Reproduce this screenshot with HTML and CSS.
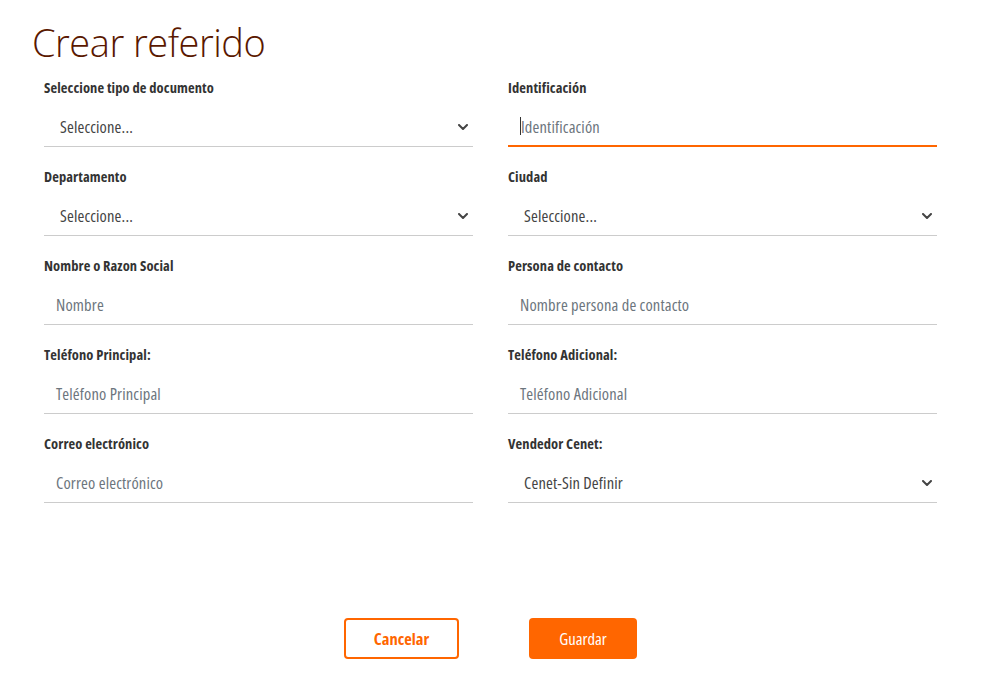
FILE: index.html
```html
<!DOCTYPE html>
<html lang="es">
<head>
<meta charset="utf-8">
<title>Crear referido</title>
<link rel="stylesheet" href="styles.css">
</head>
<body>
<div class="page">
  <h1 class="title">Crear referido</h1>
  <form class="form">
    <div class="grid">
      <div class="field">
        <label class="label">Seleccione tipo de documento</label>
        <div class="control select"><span class="value">Seleccione...</span><svg class="chev" viewBox="0 0 10 6"><path d="M1 1l4 4 4-4" /></svg></div>
      </div>
      <div class="field">
        <label class="label">Identificación</label>
        <div class="control input focused"><span class="caret"></span><span class="ph">Identificación</span></div>
      </div>
      <div class="field">
        <label class="label">Departamento</label>
        <div class="control select"><span class="value">Seleccione...</span><svg class="chev" viewBox="0 0 10 6"><path d="M1 1l4 4 4-4" /></svg></div>
      </div>
      <div class="field">
        <label class="label">Ciudad</label>
        <div class="control select"><span class="value">Seleccione...</span><svg class="chev" viewBox="0 0 10 6"><path d="M1 1l4 4 4-4" /></svg></div>
      </div>
      <div class="field">
        <label class="label">Nombre o Razon Social</label>
        <div class="control input"><span class="ph">Nombre</span></div>
      </div>
      <div class="field">
        <label class="label">Persona de contacto</label>
        <div class="control input"><span class="ph">Nombre persona de contacto</span></div>
      </div>
      <div class="field">
        <label class="label">Teléfono Principal:</label>
        <div class="control input"><span class="ph">Teléfono Principal</span></div>
      </div>
      <div class="field">
        <label class="label">Teléfono Adicional:</label>
        <div class="control input"><span class="ph">Teléfono Adicional</span></div>
      </div>
      <div class="field">
        <label class="label">Correo electrónico</label>
        <div class="control input"><span class="ph">Correo electrónico</span></div>
      </div>
      <div class="field">
        <label class="label">Vendedor Cenet:</label>
        <div class="control select"><span class="value">Cenet-Sin Definir</span><svg class="chev" viewBox="0 0 10 6"><path d="M1 1l4 4 4-4" /></svg></div>
      </div>
    </div>
    <div class="actions">
      <button type="button" class="btn btn-outline">Cancelar</button>
      <button type="button" class="btn btn-solid">Guardar</button>
    </div>
  </form>
</div>
</body>
</html>
```
FILE: styles.css
```css
html, body {
  margin: 0;
  padding: 0;
  background: #ffffff;
}
body {
  font-family: "Open Sans", Roboto, sans-serif;
  font-stretch: 75%;
  color: #333333;
}
.page {
  padding: 14px 70px 0 44px;
}
.title {
  margin: 0 0 0 -12px;
  font-family: "Open Sans", "Noto Sans", sans-serif;
  font-stretch: 100%;
  font-weight: 300;
  font-size: 38px;
  line-height: 56px;
  color: #5a1800;
  letter-spacing: -0.5px;
}
.form {
  display: flex;
  flex-direction: column;
}
.grid {
  display: grid;
  grid-template-columns: 429px 429px;
  column-gap: 35px;
  row-gap: 20px;
  margin-top: 8px;
}
.field {
  display: flex;
  flex-direction: column;
}
.label {
  font-weight: bold;
  font-size: 14.5px;
  letter-spacing: 0.1px;
  line-height: 20px;
  color: #333333;
  height: 20px;
}
.control {
  display: flex;
  align-items: center;
  height: 49px;
  padding-top: 9px;
  border-bottom: 1px solid #cccccc;
  font-size: 16.5px;
  letter-spacing: 0.15px;
  box-sizing: border-box;
}
.select {
  padding-left: 16px;
  padding-right: 5px;
  justify-content: space-between;
  color: #444444;
}
.input {
  padding-left: 12px;
  padding-right: 12px;
  color: #6c757d;
}
.input.focused {
  border-bottom: 2px solid #ff6600;
}
.caret {
  width: 1px;
  height: 18px;
  background: #333333;
}
.chev {
  width: 10px;
  height: 6px;
  fill: none;
  stroke: #444444;
  stroke-width: 2;
  stroke-linecap: round;
  stroke-linejoin: round;
}
.actions {
  display: flex;
  justify-content: center;
  gap: 70px;
  margin-top: 115px;
}
.btn {
  height: 41px;
  border-radius: 4px;
  font-family: inherit;
  font-stretch: 75%;
  font-size: 16.5px;
  cursor: pointer;
  box-sizing: border-box;
}
.btn-outline {
  width: 115px;
  background: #ffffff;
  border: 2px solid #ff6600;
  color: #ff6600;
  font-weight: bold;
}
.btn-solid {
  width: 108px;
  background: #ff6600;
  border: none;
  color: #ffffff;
}
```
